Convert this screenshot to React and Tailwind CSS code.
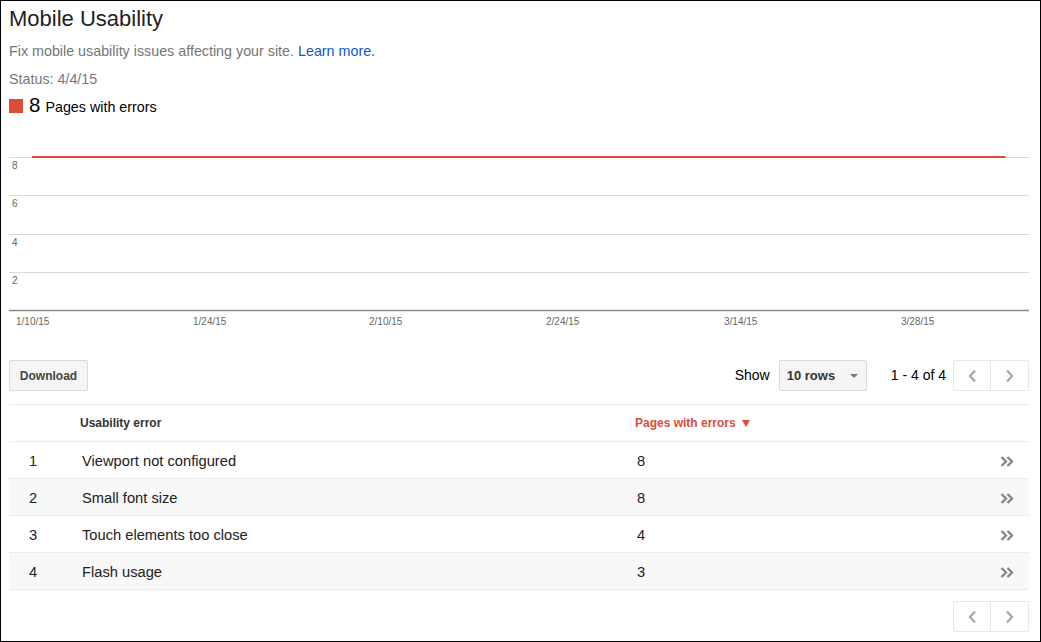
import React from "react";

const rows = [
  { n: 1, name: "Viewport not configured", count: 8 },
  { n: 2, name: "Small font size", count: 8 },
  { n: 3, name: "Touch elements too close", count: 4 },
  { n: 4, name: "Flash usage", count: 3 },
];

function Chevron({ dir }) {
  return (
    <svg width="9" height="14" viewBox="0 0 9 14">
      {dir === "left" ? (
        <polyline points="7,1.5 2,7 7,12.5" fill="none" stroke="#a6a6a6" strokeWidth="2.2" />
      ) : (
        <polyline points="2,1.5 7,7 2,12.5" fill="none" stroke="#a6a6a6" strokeWidth="2.2" />
      )}
    </svg>
  );
}

function Pager() {
  return (
    <div className="flex h-[31px] border border-[#e8e8e8] rounded-[2px] bg-white">
      <div className="w-[37px] flex items-center justify-center border-r border-[#e8e8e8]">
        <Chevron dir="left" />
      </div>
      <div className="w-[37px] flex items-center justify-center">
        <Chevron dir="right" />
      </div>
    </div>
  );
}

function DoubleChevron() {
  return (
    <svg width="14" height="11" viewBox="0 0 14 11">
      <polyline points="1.5,1 6,5.5 1.5,10" fill="none" stroke="#858585" strokeWidth="2.3" />
      <polyline points="7.5,1 12,5.5 7.5,10" fill="none" stroke="#858585" strokeWidth="2.3" />
    </svg>
  );
}

function Chart() {
  const grid = [17.5, 55.5, 94.5, 132.5];
  const ylabels = [
    { t: "8", y: 28.6 },
    { t: "6", y: 66.6 },
    { t: "4", y: 105.6 },
    { t: "2", y: 143.6 },
  ];
  const xlabels = [
    { t: "1/10/15", x: 7 },
    { t: "1/24/15", x: 184 },
    { t: "2/10/15", x: 360 },
    { t: "2/24/15", x: 537 },
    { t: "3/14/15", x: 715 },
    { t: "3/28/15", x: 892 },
  ];
  return (
    <svg width="1020" height="190" viewBox="0 0 1020 190" className="block mt-[23px]">
      {grid.map((y) => (
        <line key={y} x1="0" x2="1020" y1={y} y2={y} stroke="#d9d9d9" strokeWidth="1" />
      ))}
      <line x1="0" x2="1020" y1="170.5" y2="170.5" stroke="#8a8a8a" strokeWidth="1.4" />
      <rect x="23" y="16" width="973.5" height="2" fill="#dd4b39" />
      {ylabels.map((l) => (
        <text key={l.t} x="3" y={l.y} fontSize="10" fill="#666" fontFamily="'Liberation Sans', Arial, sans-serif">
          {l.t}
        </text>
      ))}
      {xlabels.map((l) => (
        <text key={l.t} x={l.x} y="185.3" fontSize="10" fill="#666" fontFamily="'Liberation Sans', Arial, sans-serif">
          {l.t}
        </text>
      ))}
    </svg>
  );
}

export default function App() {
  return (
    <div
      className="w-[1041px] h-[642px] border border-black bg-white pl-[8px] pr-[11px] pt-[5px] overflow-hidden"
      style={{ fontFamily: "'Liberation Sans', Arial, Helvetica, sans-serif" }}
    >
      <div className="text-[22px] leading-[26px] text-[#222]">Mobile Usability</div>
      <div className="mt-[9px] text-[14.3px] leading-[20px] text-[#757575]">
        Fix mobile usability issues affecting your site.{" "}
        <span className="text-[#1155cc]">Learn more.</span>
      </div>
      <div className="mt-[8px] text-[14.3px] leading-[20px] text-[#777]">Status: 4/4/15</div>
      <div className="mt-[4px] flex items-baseline h-[24px]">
        <span className="inline-block w-[14px] h-[14px] bg-[#dd4b39] translate-y-[1px]"></span>
        <span className="ml-[6px] text-[20.5px] leading-[24px] text-black">8</span>
        <span className="ml-[5px] text-[14.3px] leading-[20px] text-black">Pages with errors</span>
      </div>

      <Chart />

      <div className="mt-[30px] flex items-center h-[31px]">
        <div className="h-[31px] w-[79px] flex items-center justify-center border border-[#d9d9d9] rounded-[2px] bg-[#f5f5f5] text-[12px] font-bold text-[#444]">
          Download
        </div>
        <div className="flex-1"></div>
        <span className="text-[14px] text-black">Show</span>
        <div className="ml-[9px] h-[31px] w-[88px] flex items-center justify-between pl-[7px] pr-[8px] border border-[#d9d9d9] rounded-[2px] bg-[#f5f5f5]">
          <span className="text-[13px] font-bold text-[#333]">10 rows</span>
          <svg width="8" height="4" viewBox="0 0 8 4">
            <polygon points="0,0 8,0 4,4" fill="#777" />
          </svg>
        </div>
        <span className="ml-[24px] text-[14px] text-black">1 - 4 of 4</span>
        <div className="ml-[7px]">
          <Pager />
        </div>
      </div>

      <div className="mt-[13px] border-t border-[#ebebeb]">
        <div className="flex items-center h-[37px] border-b border-[#ebebeb] text-[12px] font-bold">
          <div className="w-[48px]"></div>
          <div className="w-[578px] pl-[23px] text-[#333]">Usability error</div>
          <div className="flex items-center text-[#dd4b39]">
            Pages with errors
            <svg width="8" height="7" viewBox="0 0 8 7" className="ml-[6px]">
              <polygon points="0,0 8,0 4,7" fill="#dd4b39" />
            </svg>
          </div>
        </div>
        {rows.map((r, i) => (
          <div
            key={r.n}
            className={
              "flex items-center h-[37px] pt-[2px] border-b border-[#ebebeb] text-[14.7px] text-[#222] " +
              (i % 2 === 1 ? "bg-[#f8f8f8]" : "bg-white")
            }
          >
            <div className="w-[48px] text-center">{r.n}</div>
            <div className="w-[580px] pl-[25px]">{r.name}</div>
            <div className="flex-1">{r.count}</div>
            <div className="pr-[15px] flex items-center">
              <DoubleChevron />
            </div>
          </div>
        ))}
      </div>

      <div className="mt-[11px] flex justify-end">
        <Pager />
      </div>
    </div>
  );
}
